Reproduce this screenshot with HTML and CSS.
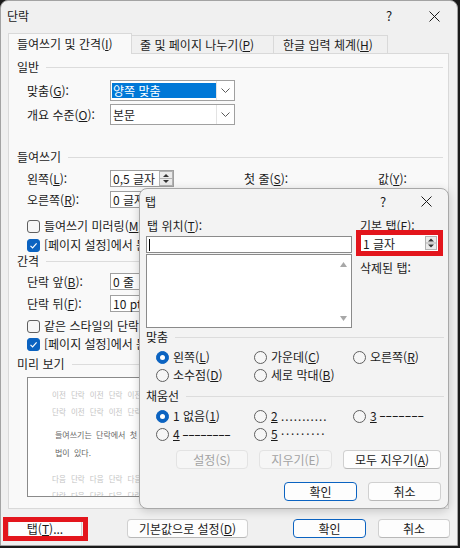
FILE: index.html
```html
<!DOCTYPE html>
<html lang="ko">
<head>
<meta charset="utf-8">
<title>단락</title>
<link rel="stylesheet" href="styles.css">
</head>
<body>
<div class="window">
  <div class="titlebar">
    <span class="title">단락</span>
    <span class="tb-help">?</span>
    <span class="tb-close"><svg width="11" height="11" viewBox="0 0 11 11"><path d="M0.5 0.5L10.5 10.5M10.5 0.5L0.5 10.5" stroke="#1b1b1b" stroke-width="1" fill="none"/></svg></span>
  </div>
  <div class="tabs">
    <div class="tab active t1">들여쓰기 및 간격(<u>I</u>)</div>
    <div class="tab t2">줄 및 페이지 나누기(<u>P</u>)</div>
    <div class="tab t3">한글 입력 체계(<u>H</u>)</div>
  </div>
  <div class="panel">
    <div class="group g-general">일반</div>
    <div class="row r-align">
      <span class="lbl">맞춤(<u>G</u>):</span>
      <div class="combo"><span class="combo-val sel">양쪽 맞춤</span><span class="combo-btn"><svg width="9" height="5" viewBox="0 0 9 5"><path d="M0.5 0.5L4.5 4.5L8.5 0.5" stroke="#5a5a5a" fill="none"/></svg></span></div>
    </div>
    <div class="row r-outline">
      <span class="lbl">개요 수준(<u>O</u>):</span>
      <div class="combo"><span class="combo-val">본문</span><span class="combo-btn"><svg width="9" height="5" viewBox="0 0 9 5"><path d="M0.5 0.5L4.5 4.5L8.5 0.5" stroke="#5a5a5a" fill="none"/></svg></span></div>
    </div>
    <div class="group g-indent">들여쓰기</div>
    <div class="row r-left">
      <span class="lbl">왼쪽(<u>L</u>):</span>
      <div class="spin"><span class="spin-val">0,5 글자</span><svg class="spin-btn" width="14" height="15" viewBox="0 0 14 15"><rect x="0.5" y="0.5" width="13" height="14" fill="#ebebeb" stroke="#b3b3b3"/><line x1="1" y1="7.5" x2="13" y2="7.5" stroke="#b3b3b3"/><path d="M4 6L7 3L10 6Z" fill="#333"/><path d="M4 9L7 12L10 9Z" fill="#333"/></svg></div>
      <span class="lbl-first">첫 줄(<u>S</u>):</span>
      <span>값(<u>Y</u>):</span>
    </div>
    <div class="row r-right">
      <span class="lbl">오른쪽(<u>R</u>):</span>
      <div class="spin"><span class="spin-val">0 글자</span><svg class="spin-btn" width="14" height="15" viewBox="0 0 14 15"><rect x="0.5" y="0.5" width="13" height="14" fill="#ebebeb" stroke="#b3b3b3"/><line x1="1" y1="7.5" x2="13" y2="7.5" stroke="#b3b3b3"/><path d="M4 6L7 3L10 6Z" fill="#333"/><path d="M4 9L7 12L10 9Z" fill="#333"/></svg></div>
    </div>
    <div class="chk c-mirror"><span class="box"></span><span>들여쓰기 미러링(<u>M</u>)</span></div>
    <div class="chk c-grid1"><span class="box on"><svg width="11" height="11" viewBox="0 0 11 11"><path d="M2.5 5.8L4.6 7.9L8.6 3.4" stroke="#fff" stroke-width="1.2" fill="none"/></svg></span><span>[페이지 설정]에서 문서 눈금을 지정했으면 오른쪽 들여쓰기 자동 조정(<u>D</u>)</span></div>
    <div class="group g-spacing">간격</div>
    <div class="row r-before">
      <span class="lbl">단락 앞(<u>B</u>):</span>
      <div class="spin"><span class="spin-val">0 줄</span><svg class="spin-btn" width="14" height="15" viewBox="0 0 14 15"><rect x="0.5" y="0.5" width="13" height="14" fill="#ebebeb" stroke="#b3b3b3"/><line x1="1" y1="7.5" x2="13" y2="7.5" stroke="#b3b3b3"/><path d="M4 6L7 3L10 6Z" fill="#333"/><path d="M4 9L7 12L10 9Z" fill="#333"/></svg></div>
    </div>
    <div class="row r-after">
      <span class="lbl">단락 뒤(<u>F</u>):</span>
      <div class="spin"><span class="spin-val">10 pt</span><svg class="spin-btn" width="14" height="15" viewBox="0 0 14 15"><rect x="0.5" y="0.5" width="13" height="14" fill="#ebebeb" stroke="#b3b3b3"/><line x1="1" y1="7.5" x2="13" y2="7.5" stroke="#b3b3b3"/><path d="M4 6L7 3L10 6Z" fill="#333"/><path d="M4 9L7 12L10 9Z" fill="#333"/></svg></div>
    </div>
    <div class="chk c-same"><span class="box"></span><span>같은 스타일의 단락 사이에 공백 삽입 안 함(<u>C</u>)</span></div>
    <div class="chk c-grid2"><span class="box on"><svg width="11" height="11" viewBox="0 0 11 11"><path d="M2.5 5.8L4.6 7.9L8.6 3.4" stroke="#fff" stroke-width="1.2" fill="none"/></svg></span><span>[페이지 설정]에서 문서 눈금을 지정했으면 줄 눈금에 맞춤(<u>W</u>)</span></div>
    <div class="group g-preview">미리 보기</div>
    <div class="preview">
      <div class="pv">이전 단락 이전 단락 이전 단락 이전 단락 이전 단락 이전 단락 이전 단락 이전</div>
      <div class="pv">단락 이전 단락 이전 단락 이전 단락 이전 단락 이전 단락 이전 단락</div>
      <div class="pv cur pv-first">들여쓰기는 단락에서 첫 줄을 몇 글자 들여 쓰거나 내어 쓰는 방</div>
      <div class="pv cur">법이 있다.</div>
      <div class="pv pv-next">다음 단락 다음 단락 다음 단락 다음 단락 다음 단락 다음 단락 다음</div>
      <div class="pv">단락 다음 단락 다음 단락 다음 단락 다음 단락 다음 단락 다음 단락</div>
    </div>
  </div>
  <div class="footer">
    <span class="btn b-tabs">탭(<u>T</u>)...</span>
    <span class="btn b-default">기본값으로 설정(<u>D</u>)</span>
    <span class="btn def b-ok">확인</span>
    <span class="btn b-cancel">취소</span>
  </div>

  <div class="tabdlg">
    <div class="td-title">
      <span>탭</span>
      <span class="td-help">?</span>
      <span class="td-close"><svg width="11" height="11" viewBox="0 0 11 11"><path d="M0.5 0.5L10.5 10.5M10.5 0.5L0.5 10.5" stroke="#1b1b1b" stroke-width="1" fill="none"/></svg></span>
    </div>
    <div class="td-body">
      <div class="td-top">
        <div class="td-left">
          <div class="td-lbl">탭 위치(<u>T</u>):</div>
          <div class="td-input"><span class="caret"></span></div>
          <div class="td-list">
            <div class="scroll">
              <svg width="7" height="5" viewBox="0 0 7 5"><path d="M0 5L3.5 0L7 5Z" fill="#a8a8a8"/></svg>
              <svg width="7" height="5" viewBox="0 0 7 5"><path d="M0 0L3.5 5L7 0Z" fill="#a8a8a8"/></svg>
            </div>
          </div>
        </div>
        <div class="td-right">
          <div>기본 탭(<u>F</u>):</div>
          <div class="td-spin"><span class="spin-val">1 글자</span><svg class="td-spin-btn" width="12" height="14" viewBox="0 0 12 14"><rect x="0.5" y="0.5" width="11" height="13" fill="#ebebeb" stroke="#b3b3b3"/><line x1="1" y1="7" x2="11" y2="7" stroke="#b3b3b3"/><path d="M3 5.5L6 2.5L9 5.5Z" fill="#333"/><path d="M3 8.5L6 11.5L9 8.5Z" fill="#333"/></svg></div>
          <div class="td-deleted">삭제된 탭:</div>
        </div>
      </div>
      <div class="group td-g-align">맞춤</div>
      <div class="radios td-r1">
        <span class="radio"><span class="dot on"></span><span>왼쪽(<u>L</u>)</span></span>
        <span class="radio w2"><span class="dot"></span><span>가운데(<u>C</u>)</span></span>
        <span class="radio"><span class="dot"></span><span>오른쪽(<u>R</u>)</span></span>
      </div>
      <div class="radios td-r2">
        <span class="radio"><span class="dot"></span><span>소수점(<u>D</u>)</span></span>
        <span class="radio w2"><span class="dot"></span><span>세로 막대(<u>B</u>)</span></span>
      </div>
      <div class="group td-g-leader">채움선</div>
      <div class="radios td-r3">
        <span class="radio"><span class="dot on"></span><span>1 없음(<u>1</u>)</span></span>
        <span class="radio w2"><span class="dot"></span><span><u>2</u> <span class="lead dots">...........</span></span></span>
        <span class="radio"><span class="dot"></span><span><u>3</u> <span class="lead dash3">–––––––</span></span></span>
      </div>
      <div class="radios td-r4">
        <span class="radio"><span class="dot"></span><span><u>4</u> <span class="lead dash4">––––––––</span></span></span>
        <span class="radio w2"><span class="dot"></span><span><u>5</u> <span class="lead mid">·········</span></span></span>
      </div>
      <div class="td-btns1">
        <span class="btn dis tb-set">설정(S)</span>
        <span class="btn dis tb-clr">지우기(E)</span>
        <span class="btn tb-clrall">모두 지우기(<u>A</u>)</span>
      </div>
      <div class="td-btns2">
        <span class="btn def tb-ok">확인</span>
        <span class="btn tb-cancel">취소</span>
      </div>
    </div>
  </div>
</div>
</body>
</html>
```

FILE: styles.css
```css
* { box-sizing: border-box; }
html, body { margin: 0; padding: 0; }
body {
  width: 460px;
  height: 548px;
  overflow: hidden;
  background: #1b1b1b;
  font-family: "Noto Sans CJK KR", "Noto Sans", sans-serif;
  font-size: 12px;
  line-height: 16px;
  color: #1b1b1b;
}
u { text-decoration: underline; text-underline-offset: 1px; text-decoration-thickness: 1px; }

.window {
  position: relative;
  width: 458px;
  height: 546px;
  background: #f0f0f0;
  border: 1px solid #a3a3a3;
  border-radius: 8px 8px 0 0;
}

/* title bar */
.titlebar { display: flex; align-items: center; height: 30px; padding-left: 6px; }
.tb-help { margin-left: auto; width: 16px; margin-right: 14px; text-align: center; font-size: 13px; }
.tb-close { width: 46px; display: flex; justify-content: center; align-items: center; }

/* tabs */
.tabs { display: flex; align-items: flex-end; height: 22px; padding-left: 7px; }
.tab {
  height: 18px;
  border: 1px solid #d9d9d9;
  border-bottom: none;
  background: #f0f0f0;
  padding-left: 8px;
  line-height: 17px;
  white-space: nowrap;
}
.tab + .tab { border-left: none; }
.tab.active {
  position: relative;
  z-index: 1;
  height: 21px;
  margin-bottom: -1px;
  background: #f9f9f9;
  line-height: 20px;
}
.t1 { width: 124px; }
.t2 { width: 142px; }
.t3 { width: 114px; padding-left: 9px; }

/* panel */
.panel {
  margin-left: 7px;
  width: 441px;
  height: 456px;
  border: 1px solid #d9d9d9;
  background: #f9f9f9;
  padding: 0 5px 0 8px;
}
.group { display: flex; align-items: center; height: 16px; gap: 7px; white-space: nowrap; }
.group::after { content: ""; flex: 1; height: 1px; background: #dcdcdc; }

.row { display: flex; align-items: center; padding-left: 10px; white-space: nowrap; }
.lbl { width: 83px; flex: none; }
.lbl-first { margin-left: 70px; width: 134px; flex: none; }

.g-general { margin-top: 5px; }
.r-align { margin-top: 5px; }
.r-outline { margin-top: 3px; }
.g-indent { margin-top: 24px; }
.r-left { margin-top: 5px; }
.r-right { margin-top: 4px; }
.c-mirror { margin-top: 10px; }
.c-grid1 { margin-top: 3px; }
.g-spacing { margin-top: 0; }
.r-before { margin-top: 4px; }
.r-after { margin-top: 5px; }
.c-same { margin-top: 6px; }
.c-grid2 { margin-top: 2px; }
.g-preview { margin-top: 4px; }

.combo {
  display: flex;
  width: 125px;
  height: 21px;
  border: 1px solid #a0a0a0;
  background: #fff;
  padding: 2px 0 2px 1px;
  flex: none;
}
.combo-val { flex: 1; line-height: 15px; padding-left: 1px; }
.combo-val.sel { background: #0078d7; color: #fff; }
.combo-btn {
  width: 18px;
  margin: -2px 0;
  border-left: 1px solid #e3e3e3;
  display: flex;
  align-items: center;
  justify-content: center;
}

.spin {
  display: flex;
  align-items: center;
  width: 64px;
  height: 17px;
  border: 1px solid #a0a0a0;
  background: #fff;
  padding-left: 2px;
  flex: none;
}
.spin-val { flex: 1; line-height: 15px; white-space: nowrap; }
.spin-btn { flex: none; display: block; }

.chk { display: flex; align-items: center; gap: 4px; padding-left: 10px; height: 16px; white-space: nowrap; }
.box {
  width: 13px;
  height: 13px;
  flex: none;
  border: 1px solid #5f5f5f;
  border-radius: 3px;
  background: #f6f6f6;
  display: flex;
  align-items: center;
  justify-content: center;
}
.box.on { background: #0b63c1; border-color: #0b63c1; }

/* preview */
.preview {
  margin-top: 5px;
  margin-left: 10px;
  width: 412px;
  height: 120px;
  border: 1px solid #8a8a8a;
  background: #fff;
  padding: 8px 0 0 24px;
  overflow: hidden;
  white-space: nowrap;
}
.pv { height: 17px; line-height: 17px; font-size: 7.5px; word-spacing: 3px; color: #c4c4c4; }
.pv.cur { height: 18px; line-height: 18px; font-size: 8px; word-spacing: 2px; color: #666; padding-left: 3px; }
.pv-first { margin-top: 6px; }
.pv-next { margin-top: 8px; }

/* buttons */
.btn {
  height: 19px;
  border: 1px solid #d0d0d0;
  border-bottom-color: #b8b8b8;
  border-radius: 4px;
  background: #fdfdfd;
  display: flex;
  align-items: center;
  justify-content: center;
  line-height: 16px;
  white-space: nowrap;
  flex: none;
}
.btn.def { border: 1px solid #0b63c1; }
.btn.dis { color: #a3a3a3; background: #f6f6f6; border-color: #e3e3e3; }

.footer { display: flex; align-items: center; padding-left: 7px; margin-top: 10px; }
.b-tabs { width: 74px; position: relative; }
.b-tabs::after {
  content: "";
  position: absolute;
  left: -6px;
  right: -7px;
  top: -3px;
  bottom: -4px;
  border: 5px solid #e3151c;
}
.b-default { margin-left: 45px; width: 121px; }
.b-ok { margin-left: 45px; width: 73px; }
.b-cancel { margin-left: 12px; width: 72px; }

/* tab dialog (floating window) */
.tabdlg {
  position: absolute;
  left: 138px;
  top: 187px;
  width: 310px;
  height: 321px;
  background: #f3f3f3;
  border: 1px solid #a8a8a8;
  border-radius: 8px;
  box-shadow: 0 2px 10px rgba(0, 0, 0, 0.18);
}
.td-title { display: flex; align-items: center; height: 25px; padding-left: 5px; }
.td-help { margin-left: auto; width: 16px; margin-right: 13px; text-align: center; font-size: 13px; }
.td-close { width: 44px; display: flex; justify-content: center; align-items: center; }
.td-body { padding: 0 4px 0 6px; }
.td-top { display: flex; margin-top: 4px; }
.td-left { width: 206px; flex: none; }
.td-lbl { padding-left: 1px; }
.td-input {
  margin-top: 2px;
  height: 17px;
  border: 1px solid #8a8a8a;
  background: #fff;
  display: flex;
  align-items: center;
  padding-left: 2px;
}
.caret { width: 1px; height: 12px; background: #000; }
.td-list {
  margin-top: 1px;
  height: 74px;
  border: 1px solid #8a8a8a;
  background: #fff;
  display: flex;
  justify-content: flex-end;
}
.scroll {
  width: 15px;
  display: flex;
  flex-direction: column;
  justify-content: space-between;
  align-items: center;
  padding: 7px 0 6px;
}
.scroll svg { display: block; }
.td-right { margin-left: 8px; white-space: nowrap; }
.td-spin {
  position: relative;
  display: flex;
  align-items: center;
  width: 79px;
  height: 18px;
  border: 1px solid #a0a0a0;
  background: #fff;
  padding-left: 2px;
}
.td-spin::after {
  content: "";
  position: absolute;
  left: -5px;
  right: -5px;
  top: -5px;
  bottom: -5px;
  border: 5px solid #e3151c;
}
.td-spin-btn { display: block; flex: none; margin-right: 1px; }
.td-deleted { margin-top: 8px; }

.td-g-align { margin-top: 1px; }
.td-g-leader { margin-top: 5px; }
.radios { display: flex; align-items: center; height: 16px; padding-left: 10px; white-space: nowrap; }
.td-r1 { margin-top: 4px; }
.td-r2 { margin-top: 2px; }
.td-r3 { margin-top: 4px; }
.td-r4 { margin-top: 2px; }
.radio { display: flex; align-items: center; gap: 4px; width: 98px; flex: none; }
.radio.w2 { width: 99px; }
.dot {
  width: 13px;
  height: 13px;
  flex: none;
  border: 1px solid #5f5f5f;
  border-radius: 50%;
  background: #f6f6f6;
  display: flex;
  align-items: center;
  justify-content: center;
}
.dot.on { background: #0b63c1; border-color: #0b63c1; }
.dot.on::after { content: ""; width: 5px; height: 5px; border-radius: 50%; background: #fff; }

.lead { font-family: "Noto Sans", sans-serif; }
.dots { letter-spacing: 1px; }
.dash3 { letter-spacing: 0.4px; vertical-align: 1px; }
.dash4 { letter-spacing: 0; }
.mid { letter-spacing: 1.8px; }

.td-btns1 { display: flex; margin-top: 8px; }
.tb-set { margin-left: 30px; width: 72px; }
.tb-clr { margin-left: 11px; width: 73px; }
.tb-clrall { margin-left: 11px; width: 98px; }
.td-btns2 { display: flex; margin-top: 13px; }
.tb-ok { margin-left: 138px; width: 73px; }
.tb-cancel { margin-left: 11px; width: 73px; }
```
